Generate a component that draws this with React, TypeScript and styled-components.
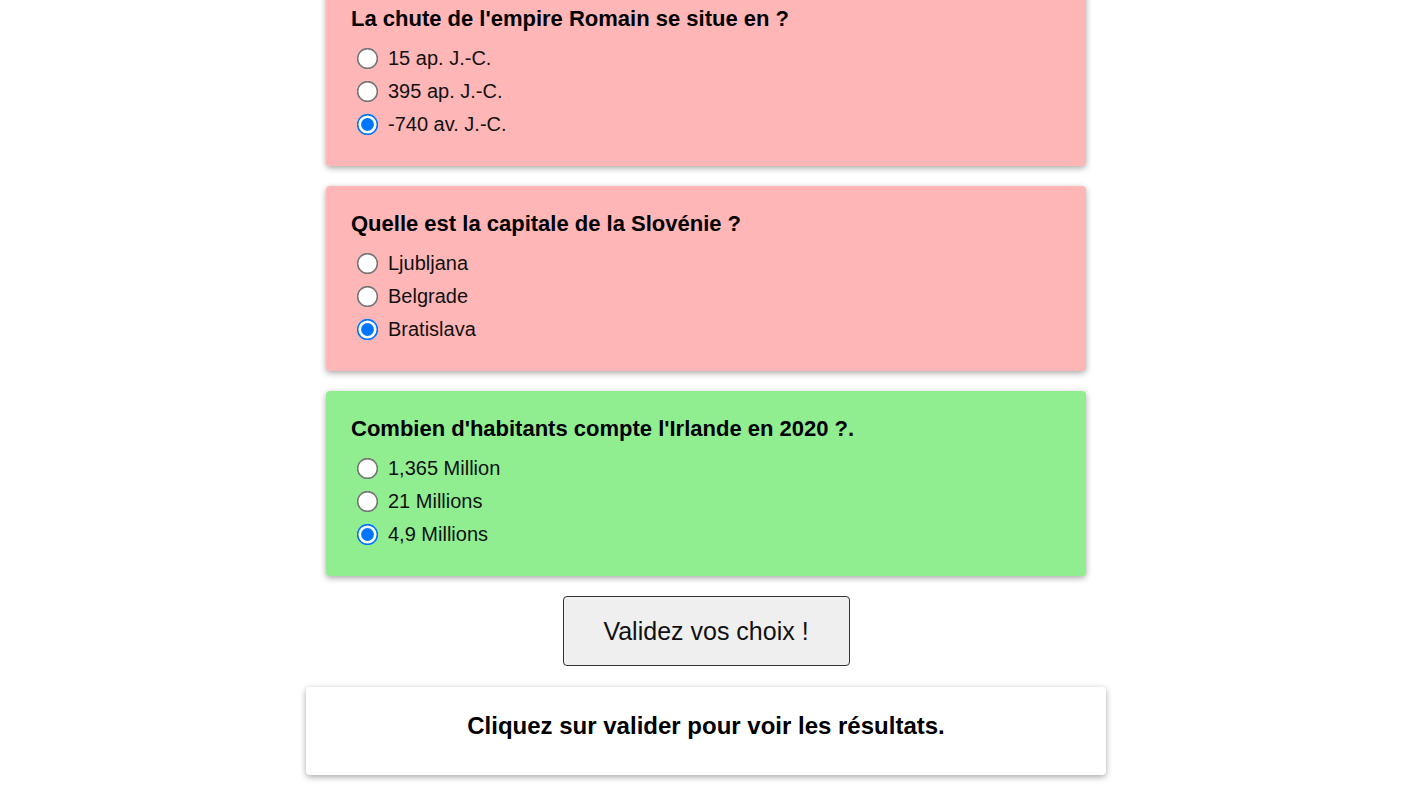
import React from "react";
import styled, { createGlobalStyle } from "styled-components";

const GlobalStyle = createGlobalStyle`
  html, body {
    margin: 0;
    padding: 0;
    background: #ffffff;
    overflow: hidden;
    font-family: "Liberation Sans", Arial, sans-serif;
    color: #111111;
  }
`;

const Page = styled.div`
  height: 100vh;
  box-sizing: border-box;
  padding: 0 12px 26px 0;
  display: flex;
  flex-direction: column;
  justify-content: flex-end;
  align-items: center;
  overflow: hidden;
`;

const Form = styled.form`
  width: 800px;
  display: flex;
  flex-direction: column;
  align-items: center;
  flex-shrink: 0;
`;

type CardProps = {
  $correct: boolean;
};

const Card = styled.div<CardProps>`
  width: 760px;
  box-sizing: border-box;
  padding: 26px 25px 25px;
  margin-bottom: 20px;
  border-radius: 4px;
  background-color: ${props => (props.$correct ? "#90ee90" : "#ffb6b6")};
  box-shadow: 0 2px 6px rgba(0, 0, 0, 0.35);
  flex-shrink: 0;
`;

const Question = styled.div`
  font-size: 22px;
  font-weight: 700;
  line-height: 24px;
  color: #000000;
  margin-bottom: 11px;
`;

const Option = styled.label`
  display: flex;
  align-items: center;
  height: 33px;
  font-size: 20px;
  color: #111111;
`;

const Radio = styled.input`
  width: 13px;
  height: 13px;
  margin: 0 14px 0 10px;
  transform: scale(1.65);
`;

const Button = styled.button`
  width: 287px;
  height: 70px;
  font-family: "Liberation Sans", Arial, sans-serif;
  font-size: 25px;
  color: #111111;
  background: #efefef;
  border: 1px solid #333333;
  border-radius: 4px;
  margin-bottom: 21px;
  cursor: pointer;
`;

const Result = styled.div`
  width: 800px;
  height: 88px;
  box-sizing: border-box;
  display: flex;
  align-items: center;
  justify-content: center;
  padding-bottom: 11px;
  background: #ffffff;
  border-radius: 4px;
  box-shadow: 0 2px 6px rgba(0, 0, 0, 0.35);
  font-size: 24px;
  font-weight: 700;
  color: #000000;
`;

type QuestionData = {
  title: string;
  answers: string[];
  checked: number;
  correct: boolean;
};

const questions: QuestionData[] = [
  {
    title: "La chute de l'empire Romain se situe en ?",
    answers: ["15 ap. J.-C.", "395 ap. J.-C.", "-740 av. J.-C."],
    checked: 2,
    correct: false,
  },
  {
    title: "Quelle est la capitale de la Slovénie ?",
    answers: ["Ljubljana", "Belgrade", "Bratislava"],
    checked: 2,
    correct: false,
  },
  {
    title: "Combien d'habitants compte l'Irlande en 2020 ?.",
    answers: ["1,365 Million", "21 Millions", "4,9 Millions"],
    checked: 2,
    correct: true,
  },
];

const App: React.FC = () => {
  return (
    <Page>
      <GlobalStyle />
      <Form onSubmit={e => e.preventDefault()}>
        {questions.map((q, qi) => (
          <Card key={qi} $correct={q.correct}>
            <Question>{q.title}</Question>
            {q.answers.map((a, ai) => (
              <Option key={ai}>
                <Radio
                  type="radio"
                  name={`q${qi}`}
                  defaultChecked={ai === q.checked}
                />
                {a}
              </Option>
            ))}
          </Card>
        ))}
        <Button type="submit">Validez vos choix !</Button>
        <Result>Cliquez sur valider pour voir les résultats.</Result>
      </Form>
    </Page>
  );
};

export default App;
